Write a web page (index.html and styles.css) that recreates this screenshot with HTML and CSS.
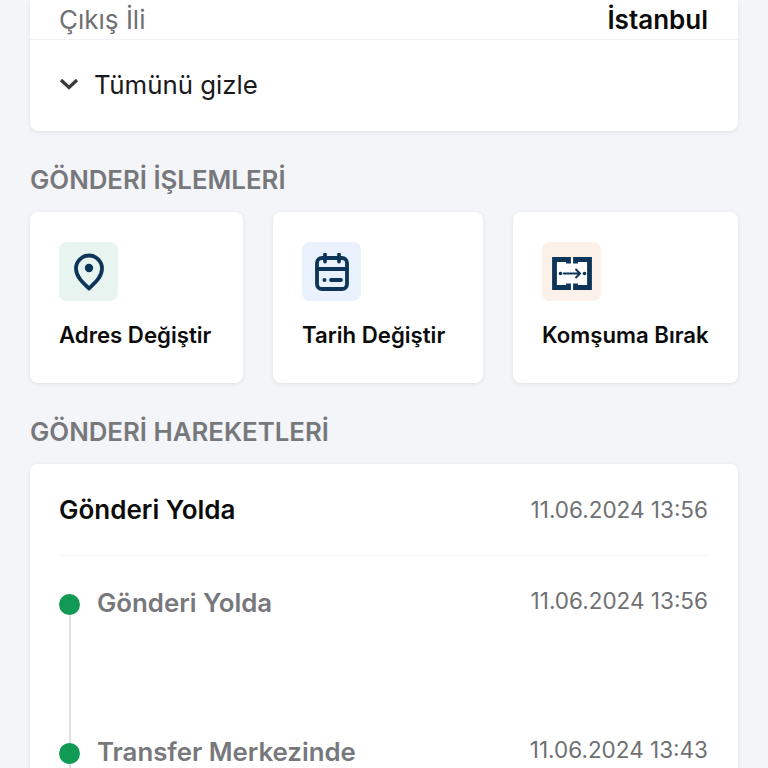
FILE: index.html
```html
<html>
    <head>
        <link rel="stylesheet" href="styles.css">
    </head>
    <body>
        <div class="page">
            <div class="card summary">
                <div class="row">
                    <span class="label">Çıkış İli</span>
                    <span class="value">İstanbul</span>
                </div>
                <div class="toggle">
                    <svg width="20" height="12" viewBox="0 0 20 12"><path d="M2 2l8 7.500L18 2" fill="none" stroke="#3a3a3c" stroke-width="3.200"/></svg>
                    <span>Tümünü gizle</span>
                </div>
            </div>

            <h2 class="heading first">GÖNDERİ İŞLEMLERİ</h2>
            <div class="actions">
                <div class="card action adres">
                    <div class="icon green">
                        <svg width="32" height="38" viewBox="0 0 32 38"><path d="M16 35.500C9 29 3 23.500 3 15.500a13 13 0 0 1 26 0C29 23.500 23 29 16 35.500z" fill="none" stroke="#0c3559" stroke-width="3.800" stroke-linejoin="round"/><circle cx="16" cy="15" r="4.200" fill="#0c3559"/></svg>
                    </div>
                    <span>Adres Değiştir</span>
                </div>
                <div class="card action tarih">
                    <div class="icon blue">
                        <svg width="34" height="38" viewBox="0 0 34 38"><rect x="2" y="5" width="30" height="31" rx="5" fill="none" stroke="#0c3559" stroke-width="3.800"/><path d="M2 16h30M10 1.500v7M24 1.500v7M16 27h10" fill="none" stroke="#0c3559" stroke-width="3.800" stroke-linecap="round"/><circle cx="9.500" cy="27" r="2" fill="#0c3559"/></svg>
                    </div>
                    <span>Tarih Değiştir</span>
                </div>
                <div class="card action komsu">
                    <div class="icon orange">
                        <svg class="komsu-icon" width="40" height="33" viewBox="0 0 40 33"><rect x="2" y="2" width="36" height="29" fill="#fff"/><path d="M16.500 6.500V2.500H2.500v28h14v-4M23.500 6.500V2.500h14v28h-14v-4" fill="none" stroke="#0c3559" stroke-width="4.800"/><path d="M11 16.500h16.500M23.500 12l4.500 4.500-4.500 4.500" fill="none" stroke="#0c3559" stroke-width="2"/><circle cx="8.500" cy="16.500" r="1.800" fill="#0c3559"/><circle cx="32.500" cy="16.500" r="1.800" fill="#0c3559"/></svg>
                    </div>
                    <span>Komşuma Bırak</span>
                </div>
            </div>

            <h2 class="heading">GÖNDERİ HAREKETLERİ</h2>
            <div class="card moves">
                <div class="moves-head">
                    <span class="status">Gönderi Yolda</span>
                    <span class="date">11.06.2024 13:56</span>
                </div>
                <div class="timeline">
                    <div class="step">
                        <div class="marker"><i class="dot"></i><i class="line"></i></div>
                        <span class="step-name">Gönderi Yolda</span>
                        <span class="date">11.06.2024 13:56</span>
                    </div>
                    <div class="step">
                        <div class="marker"><i class="dot"></i><i class="line"></i></div>
                        <span class="step-name">Transfer Merkezinde</span>
                        <span class="date">11.06.2024 13:43</span>
                    </div>
                </div>
            </div>
        </div>
    </body>
</html>
```
FILE: styles.css
```css
* {
    margin: 0;
    padding: 0;
    box-sizing: border-box;
}

html,body {
    height: 100%;
    overflow: hidden;
}

body {
    background: #f4f5f8;
    font-family: Inter, "Liberation Sans", sans-serif;
    color: #0b0b0c;
}

.page {
    height: 768px;
    overflow: hidden;
    padding: 0 30px;
}

.card {
    background: #fff;
    border-radius: 8px;
    box-shadow: 0 1px 4px rgba(40, 50, 70, 0.1);
}

.summary {
    height: 131px;
    border-radius: 0 0 8px 8px;
}

.row {
    height: 40px;
    padding: 0 30px 0 29px;
    display: flex;
    justify-content: space-between;
    align-items: center;
    border-bottom: 1px solid #f2f2f4;
    font-size: 26px;
}

.label {
    color: #6f7073;
}

.value {
    font-weight: 600;
}

.toggle {
    display: flex;
    align-items: center;
    gap: 15px;
    padding: 0 29px 2px;
    height: 90px;
    font-size: 25.8px;
    color: #1a1a1c;
}

.heading {
    height: 81px;
    padding-top: 34px;
    font-size: 25.8px;
    line-height: 29px;
    font-weight: 600;
    color: #77787c;
}

.actions {
    display: flex;
    gap: 30px;
}

.action {
    height: 171px;
    padding: 30px 0 0 29px;
    font-size: 22.2px;
    font-weight: 600;
}

.adres { width: 213px; }
.tarih { width: 210px; }
.komsu { width: 225px; }

.icon {
    width: 59px;
    height: 59px;
    border-radius: 8px;
    margin-bottom: 20px;
    display: flex;
    align-items: center;
    justify-content: center;
}

.komsu-icon {
    margin-top: 4px;
}

.green { background: #e8f4ef; }
.blue { background: #e9f1fc; }
.orange { background: #fbf1e8; }

.moves {
    height: 400px;
    padding: 0 30px 0 29px;
}

.moves-head {
    height: 92px;
    display: flex;
    justify-content: space-between;
    align-items: center;
    border-bottom: 1px solid #f4f4f6;
}

.status {
    font-size: 26px;
    font-weight: 600;
}

.date {
    margin-left: auto;
    font-size: 22.5px;
    color: #6f7073;
}

.timeline {
    padding-top: 31px;
}

.step {
    height: 149px;
    display: flex;
    align-items: flex-start;
    font-size: 25.8px;
}

.marker {
    width: 38px;
    height: 100%;
}

.dot {
    display: block;
    width: 21px;
    height: 21px;
    margin-top: 7px;
    border-radius: 50%;
    background: #109a53;
}

.line {
    display: block;
    width: 2px;
    height: 128px;
    margin-left: 9.5px;
    background: #e0e0e2;
}

.step-name {
    font-weight: 600;
    color: #77787c;
}
```
